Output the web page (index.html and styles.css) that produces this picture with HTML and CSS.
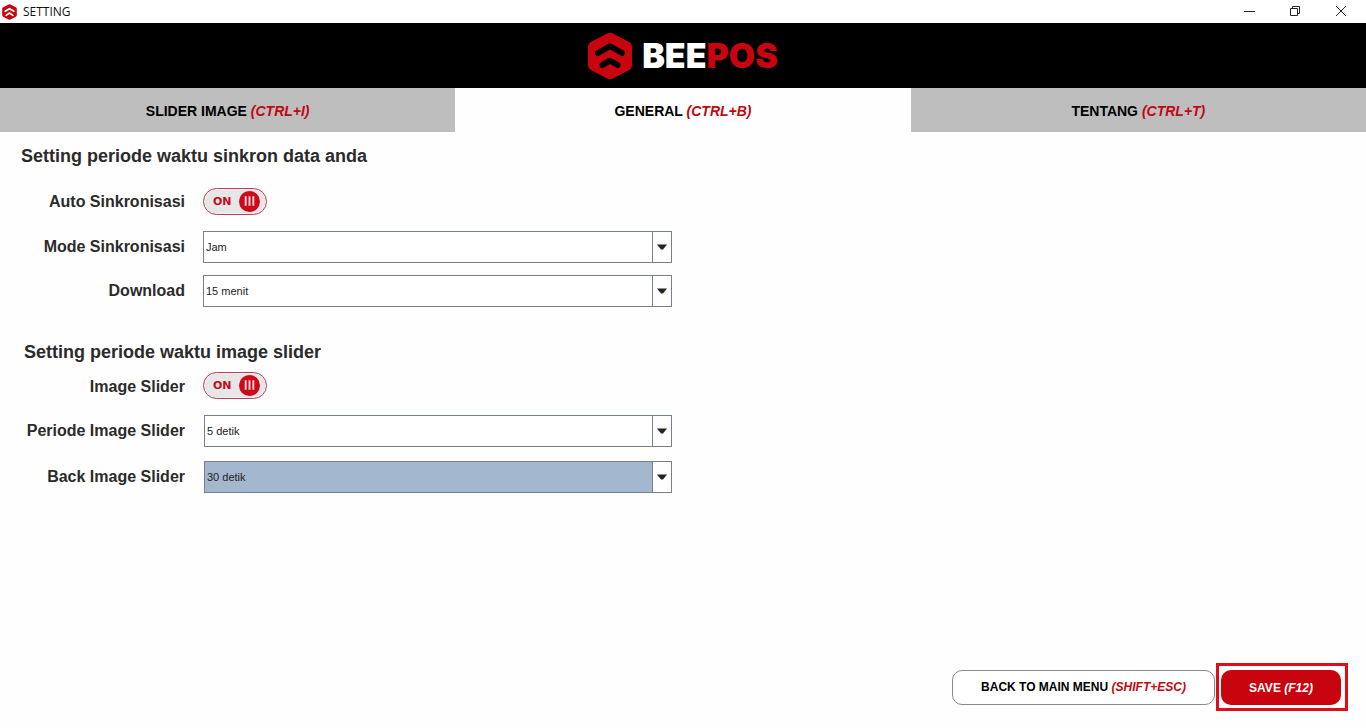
FILE: index.html
```html
<!DOCTYPE html>
<html lang="id">
<head>
<meta charset="utf-8">
<meta name="viewport" content="width=device-width, initial-scale=1">
<title>Setting</title>
<link rel="stylesheet" href="styles.css">
</head>
<body>
<div class="window">
  <div class="titlebar">
    <svg class="app-icon" viewBox="0 0 44 48" aria-hidden="true"><path class="hex" d="M19 1.500q3-1.600 6 0l16 8.500q3 1.700 3 5v18q0 3.300-3 5l-16 8.500q-3 1.600-6 0L3 38q-3-1.700-3-5V15q0-3.300 3-5z"/><path class="chevron light" d="M9 22l13-8 13 8M12 34l10-7 10 7"/></svg>
    <span class="window-title">SETTING</span>
    <div class="window-controls">
      <button type="button" aria-label="Minimize"><svg viewBox="0 0 12 12" aria-hidden="true"><path d="M1 6.500h11"/></svg></button>
      <button type="button" aria-label="Restore"><svg viewBox="0 0 12 12" aria-hidden="true"><path d="M1.500 3.500h7v7h-7zM3.500 3.500v-2h7v7h-2"/></svg></button>
      <button type="button" aria-label="Close"><svg viewBox="0 0 12 12" aria-hidden="true"><path d="M1 1l10 10M11 1L1 11"/></svg></button>
    </div>
  </div>

  <header class="brand">
    <svg class="brand-mark" viewBox="0 0 44 48" aria-hidden="true"><path class="hex" d="M19 1.500q3-1.600 6 0l16 8.500q3 1.700 3 5v18q0 3.300-3 5l-16 8.500q-3 1.600-6 0L3 38q-3-1.700-3-5V15q0-3.300 3-5z"/><path class="chevron" d="M10 21l10.500-6q1.500-.8 3 0l10.500 6M14.500 33l6-3.500q1.500-.8 3 0l6 3.500"/></svg>
    <span class="brand-name">BEE<span class="brand-accent">POS</span></span>
  </header>

  <nav class="tabs" role="tablist">
    <button class="tab" type="button" role="tab" aria-selected="false">SLIDER IMAGE <em>(CTRL+I)</em></button>
    <button class="tab active" type="button" role="tab" aria-selected="true">GENERAL <em>(CTRL+B)</em></button>
    <button class="tab" type="button" role="tab" aria-selected="false">TENTANG <em>(CTRL+T)</em></button>
  </nav>

  <main class="content">
    <section class="group sync">
      <h2>Setting periode waktu sinkron data anda</h2>
      <div class="fields">
        <label for="auto">Auto Sinkronisasi</label>
        <div class="switch"><input id="auto" type="checkbox" role="switch" checked><span>ON</span><svg viewBox="0 0 22 22" aria-hidden="true"><circle cx="11" cy="11" r="11"/><path d="M7 5.500v10M11 5.500v10M15 5.500v10"/></svg></div>
        <label for="mode">Mode Sinkronisasi</label>
        <div class="combo"><select id="mode"><option>Jam</option></select><svg viewBox="0 0 10 6" aria-hidden="true"><path d="M0 .5h10L6 5.500H4z"/></svg></div>
        <label for="download">Download</label>
        <div class="combo"><select id="download"><option>15 menit</option></select><svg viewBox="0 0 10 6" aria-hidden="true"><path d="M0 .5h10L6 5.500H4z"/></svg></div>
      </div>
    </section>
    <section class="group slider">
      <h2>Setting periode waktu image slider</h2>
      <div class="fields">
        <label for="slider">Image Slider</label>
        <div class="switch"><input id="slider" type="checkbox" role="switch" checked><span>ON</span><svg viewBox="0 0 22 22" aria-hidden="true"><circle cx="11" cy="11" r="11"/><path d="M7 5.500v10M11 5.500v10M15 5.500v10"/></svg></div>
        <label for="period">Periode Image Slider</label>
        <div class="combo"><select id="period"><option>5 detik</option></select><svg viewBox="0 0 10 6" aria-hidden="true"><path d="M0 .5h10L6 5.500H4z"/></svg></div>
        <label for="back">Back Image Slider</label>
        <div class="combo selected"><select id="back"><option>30 detik</option></select><svg viewBox="0 0 10 6" aria-hidden="true"><path d="M0 .5h10L6 5.500H4z"/></svg></div>
      </div>
    </section>
  </main>

  <footer class="actions">
    <button class="button" type="button">BACK TO MAIN MENU <em>(SHIFT+ESC)</em></button>
    <div class="highlight"><button class="button primary" type="button">SAVE <em>(F12)</em></button></div>
  </footer>
</div>
</body>
</html>
```
FILE: styles.css
```css
* { box-sizing: border-box; }

body {
  margin: 0;
  background: #fefefe;
  color: #2b2b2b;
  font-family: "Liberation Sans", Arial, sans-serif;
}

button { font-family: inherit; }

.window {
  display: flex;
  flex-direction: column;
  min-height: 100vh;
}

.titlebar {
  display: flex;
  align-items: center;
  height: 23px;
  padding-left: 2px;
  background: #fff;
}

.app-icon { width: 15px; height: 16px; }
.hex { fill: #c8040f; }
.chevron { fill: none; stroke: #000; stroke-width: 6; stroke-linecap: round; stroke-linejoin: round; }
.chevron.light { stroke: #fff; stroke-width: 5; }

.window-title {
  margin-left: 6px;
  color: #111;
  font: 12px "Open Sans", sans-serif;
}

.window-controls { display: flex; margin-left: auto; padding-right: 2px; }
.window-controls button {
  display: flex;
  align-items: center;
  justify-content: center;
  width: 46px;
  height: 23px;
  padding: 0 0 2px;
  border: 0;
  background: none;
}
.window-controls svg { width: 12px; height: 12px; fill: none; stroke: #222; }

.brand {
  display: flex;
  align-items: center;
  justify-content: center;
  gap: 10px;
  height: 65px;
  background: #000;
}
.brand-mark { width: 44px; height: 48px; }
.brand-name {
  color: #fff;
  font: 900 34px/46px Inter, sans-serif;
}
.brand-accent { color: #c8040f; }

.tabs { display: grid; grid-template-columns: repeat(3, 1fr); }
.tab {
  height: 44px;
  padding: 2px 0 0;
  border: 0;
  background: #bebebe;
  color: #000;
  font-size: 14px;
  font-weight: bold;
}
.tab.active { background: #fefefe; }
em { color: #c00812; }

.content { flex: 1; padding: 12px 21px; }
.group h2 { margin: 0; font-size: 18px; line-height: 24px; }
.sync h2 { margin-bottom: 20px; }
.slider { margin-top: 33px; }
.slider h2 { margin-bottom: 8px; padding-left: 3px; }
.sync .fields { row-gap: 12px; }
.slider .fields { row-gap: 14px; }

.fields {
  display: grid;
  grid-template-columns: 164px minmax(0, 469px);
  column-gap: 18px;
  align-items: center;
}
.fields label { font-size: 16px; font-weight: bold; text-align: right; }

.switch {
  display: flex;
  position: relative;
  align-items: center;
  justify-content: space-between;
  width: 64px;
  height: 27px;
  padding: 0 6px 0 9px;
  border: 1px solid #b8405a;
  border-radius: 14px;
  background: #e6e6e6;
  box-shadow: inset 0 0 0 1px #f6eeee;
  color: #c00d1c;
  font: bold 11px "DejaVu Sans", "Liberation Sans", sans-serif;
}
.switch input { position: absolute; inset: 0; width: 100%; height: 100%; margin: 0; opacity: 0; }
.switch svg { width: 21px; height: 21px; fill: #cc0a1a; stroke: none; }
.switch path { stroke: #f8d8da; stroke-width: 2; }
.sync .switch { margin-bottom: 4px; }
.sync label:first-child { margin-bottom: 3px; }
.slider .switch { margin-bottom: 2px; }

.combo {
  display: grid;
  grid-template-columns: minmax(0, 1fr) 19px;
  height: 32px;
  border: 1px solid #75808a;
  background: #fff;
}
.slider .combo { margin-left: 1px; }
.combo select {
  grid-area: 1 / 1 / 2 / 3;
  appearance: none;
  padding: 0 20px 0 2px;
  border: 0;
  border-radius: 0;
  outline: 0;
  background: none;
  color: #222;
  font: 11px "Liberation Sans", Arial, sans-serif;
}
.combo svg {
  grid-area: 1 / 2;
  width: 100%;
  height: 100%;
  padding: 0 4px;
  border-left: 1px solid #75808a;
  background: #fff;
  fill: #222;
  pointer-events: none;
}
.selected select { background: #a3b8cf; }

.actions {
  display: flex;
  align-items: center;
  justify-content: flex-end;
  gap: 1px;
  padding: 0 18px 17px 0;
}
.button {
  width: 263px;
  height: 35px;
  border: 1px solid #888;
  border-radius: 10px;
  background: #fff;
  color: #000;
  font-size: 12px;
  font-weight: bold;
}
.highlight { padding: 4px 4px 3px 2px; border: 3px solid #e00c16; background: #fff; }
.primary { width: 120px; border: 0; background: #c8040f; color: #fff; }
.primary em { color: inherit; }
```
